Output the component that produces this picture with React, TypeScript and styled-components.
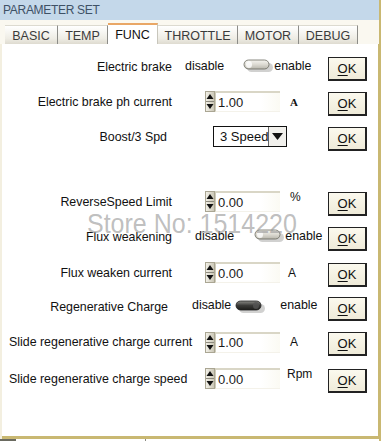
import styled, { createGlobalStyle } from 'styled-components'

const GlobalStyle = createGlobalStyle`
  html, body {
    margin: 0;
    padding: 0;
    background: #ffffff;
  }
  #root {
    width: 381px;
    height: 441px;
  }
`

const khaki = '#c9b872'
const font = '"Liberation Sans", Arial, sans-serif'

const Window = styled.div`
  width: 381px;
  height: 441px;
  display: flex;
  flex-direction: column;
  background: #f3efe0;
  font-family: ${font};
  color: #111;
  overflow: hidden;
  border-right: 2px solid ${khaki};
  box-sizing: border-box;
`

const TitleBar = styled.div`
  height: 20px;
  flex: none;
  background: #c4d8ea;
  color: #3e5166;
  font-size: 12px;
  letter-spacing: -0.3px;
  display: flex;
  align-items: center;
  padding-left: 3px;
`

const TabStrip = styled.div`
  height: 24px;
  flex: none;
  display: flex;
  align-items: flex-end;
  padding-left: 5px;
  background: #faf8f0;
`

const Tab = styled.div<{ $w: number; $active?: boolean }>`
  width: ${p => p.$w}px;
  height: ${p => (p.$active ? 21 : 19)}px;
  box-sizing: border-box;
  display: flex;
  align-items: center;
  justify-content: center;
  font-size: 12.5px;
  color: ${p => (p.$active ? '#111' : '#3b3b3b')};
  background: ${p => (p.$active ? '#ffffff' : 'linear-gradient(#ffffff, #eeece4 70%, #dedbd0)')};
  border-top: ${p => (p.$active ? '2px solid #e9a766' : '1px solid #dcdad0')};
  border-right: 1px solid ${p => (p.$active ? '#c8c6bc' : '#8c8c88')};
  padding-top: ${p => (p.$active ? 0 : 1)}px;
`

const Panel = styled.div`
  flex: 1;
  position: relative;
  margin-left: 2px;
  background: #ffffff;
  border-right: 1px solid ${khaki};
  border-bottom: 3px solid ${khaki};
  padding-top: 5px;
  display: flex;
  flex-direction: column;
`

const BottomEdge = styled.div`
  height: 2px;
  flex: none;
  background: linear-gradient(90deg, #6a6a60 0 16px, #ffffff 16px 145px, #8a8a80 145px 146px, #ffffff 146px);
`

const Row = styled.div<{ $h: number }>`
  height: ${p => p.$h}px;
  flex: none;
  display: flex;
  align-items: center;
  font-size: 12.4px;
`

const Label = styled.span<{ $w: number; $left?: boolean }>`
  width: ${p => p.$w}px;
  flex: none;
  box-sizing: border-box;
  white-space: nowrap;
  text-align: ${p => (p.$left ? 'left' : 'right')};
  padding-left: ${p => (p.$left ? 7 : 0)}px;
`

const Controls = styled.div<{ $ml: number }>`
  flex: 1;
  display: flex;
  align-items: center;
  margin-left: ${p => p.$ml}px;
  white-space: nowrap;
`

const Word = styled.span<{ $ml?: number; $raise?: number }>`
  margin-left: ${p => p.$ml ?? 0}px;
  margin-bottom: ${p => p.$raise ?? 0}px;
`

const Unit = styled.span<{ $ml: number; $serif?: boolean; $raise?: number }>`
  margin-left: ${p => p.$ml}px;
  margin-bottom: ${p => p.$raise ?? 0}px;
  font-family: ${p => (p.$serif ? '"Liberation Serif", "Times New Roman", serif' : font)};
  font-weight: ${p => (p.$serif ? 700 : 400)};
  font-size: ${p => (p.$serif ? 11 : 12)}px;
`

const NumberField = styled.div`
  width: 65px;
  height: 21px;
  box-sizing: border-box;
  border-top: 2px solid #d9d6c6;
  border-left: 1px solid #cfccba;
  border-bottom: 1px solid #f4f2ea;
  background: linear-gradient(90deg, #ffffff 70%, #fbfaf3);
  font-size: 13px;
  color: #1a1a1a;
  display: flex;
  align-items: center;
  padding-left: 2px;
`

const Select = styled.div`
  width: 74px;
  height: 21px;
  box-sizing: border-box;
  border: 1px solid #111;
  display: flex;
  align-items: center;
  font-size: 13px;
  background: #ffffff;
`

const SelectText = styled.span`
  flex: 1;
  padding-left: 6px;
`

const SelectArrow = styled.span`
  width: 17px;
  height: 19px;
  border-left: 1px solid #666;
  background: #f1f0ec;
  display: flex;
  align-items: center;
  justify-content: center;
`

const OkButton = styled.button`
  flex: none;
  width: 39px;
  height: 24px;
  margin-left: auto;
  margin-right: 11px;
  margin-top: 4px;
  padding: 0;
  box-sizing: border-box;
  border: 1px solid #222;
  border-right-width: 2px;
  border-bottom-width: 2px;
  background: linear-gradient(#fbf9ee, #efebd9);
  font-family: ${font};
  font-size: 13px;
  color: #111;
  display: flex;
  align-items: center;
  justify-content: center;
`

const Mnemonic = styled.span`
  text-decoration: underline;
  text-underline-offset: 2px;
`

const Spacer = styled.div<{ $h: number }>`
  height: ${p => p.$h}px;
  flex: none;
`

const Watermark = styled.div`
  position: absolute;
  left: 85px;
  top: 166px;
  font-family: ${font};
  font-size: 25px;
  line-height: 26px;
  transform: scaleY(1.1);
  color: rgba(150, 150, 150, 0.62);
  white-space: nowrap;
  pointer-events: none;
`

const Spinner = () => (
  <svg width="10" height="21" viewBox="0 0 10 21">
    <defs>
      <linearGradient id="spg" x1="0" x2="1">
        <stop offset="0" stopColor="#f4f2ea" />
        <stop offset="1" stopColor="#c9c5b4" />
      </linearGradient>
    </defs>
    <rect x="0.5" y="0.5" width="9" height="20" fill="url(#spg)" stroke="#aaa693" />
    <line x1="1" y1="10.5" x2="9" y2="10.5" stroke="#8d8a7e" />
    <path d="M5 3 L8.5 8 L1.5 8 Z" fill="#111" />
    <path d="M5 18 L8.5 13 L1.5 13 Z" fill="#111" />
  </svg>
)

const Toggle = ({ on }: { on?: boolean }) => (
  <svg width="31" height="16" viewBox="0 0 31 16">
    <defs>
      <linearGradient id={on ? 'tgOn' : 'tgOff'} x1="0" y1="0" x2="0" y2="1">
        <stop offset="0" stopColor={on ? '#8a8a86' : '#f6f5f0'} />
        <stop offset="0.5" stopColor={on ? '#3a3a38' : '#dcdad2'} />
        <stop offset="1" stopColor={on ? '#1c1c1a' : '#b8b6ac'} />
      </linearGradient>
    </defs>
    <rect x="4" y="6" width="26" height="9" rx="4.5" fill="#9a9a96" opacity="0.45" />
    <rect x="1" y="3" width="25" height="9" rx="4.5" fill={`url(#${on ? 'tgOn' : 'tgOff'})`} stroke={on ? '#222' : '#6a6960'} strokeWidth="0.8" />
    <ellipse cx={on ? 21 : 6} cy="7.5" rx="3" ry="3.6" fill={on ? '#555' : '#fff'} opacity="0.8" />
  </svg>
)

const Ok = () => (
  <OkButton>
    <Mnemonic>O</Mnemonic>K
  </OkButton>
)

const Arrow = () => (
  <svg width="11" height="7" viewBox="0 0 11 7">
    <path d="M0 0 L11 0 L5.5 7 Z" fill="#111" />
  </svg>
)

const tabs: { name: string; w: number }[] = [
  { name: 'BASIC', w: 53 },
  { name: 'TEMP', w: 50 },
  { name: 'FUNC', w: 50 },
  { name: 'THROTTLE', w: 80 },
  { name: 'MOTOR', w: 61 },
  { name: 'DEBUG', w: 59 },
]

export default function App() {
  return (
    <>
      <GlobalStyle />
      <Window>
        <TitleBar>PARAMETER SET</TitleBar>
        <TabStrip>
          {tabs.map(t => (
            <Tab key={t.name} $w={t.w} $active={t.name === 'FUNC'}>
              {t.name}
            </Tab>
          ))}
        </TabStrip>
        <Panel>
          <Row $h={35}>
            <Label $w={170}>Electric brake</Label>
            <Controls $ml={13}>
              <Word $raise={2}>disable</Word>
              <Word $ml={19}>
                <Toggle />
              </Word>
              <Word $raise={2}>enable</Word>
            </Controls>
            <Ok />
          </Row>
          <Row $h={35}>
            <Label $w={170}>Electric brake ph current</Label>
            <Controls $ml={33}>
              <Spinner />
              <NumberField>1.00</NumberField>
              <Unit $ml={10} $serif>A</Unit>
            </Controls>
            <Ok />
          </Row>
          <Row $h={35}>
            <Label $w={165}>Boost/3 Spd</Label>
            <Controls $ml={46}>
              <Select>
                <SelectText>3 Speed</SelectText>
                <SelectArrow>
                  <Arrow />
                </SelectArrow>
              </Select>
            </Controls>
            <Ok />
          </Row>
          <Spacer $h={30} />
          <Row $h={35}>
            <Label $w={170}>ReverseSpeed Limit</Label>
            <Controls $ml={33}>
              <Spinner />
              <NumberField>0.00</NumberField>
              <Unit $ml={10} $raise={10}>%</Unit>
            </Controls>
            <Ok />
          </Row>
          <Row $h={35}>
            <Label $w={170}>Flux weakening</Label>
            <Controls $ml={23}>
              <Word $raise={2}>disable</Word>
              <Word $ml={20}>
                <Toggle />
              </Word>
              <Word $raise={2}>enable</Word>
            </Controls>
            <Ok />
          </Row>
          <Row $h={37}>
            <Label $w={170}>Flux weaken current</Label>
            <Controls $ml={33}>
              <Spinner />
              <NumberField>0.00</NumberField>
              <Unit $ml={8}>A</Unit>
            </Controls>
            <Ok />
          </Row>
          <Row $h={32}>
            <Label $w={166}>Regenerative Charge</Label>
            <Controls $ml={24}>
              <Word $raise={4}>disable</Word>
              <Word $ml={4}>
                <Toggle on />
              </Word>
              <Word $ml={14} $raise={4}>enable</Word>
            </Controls>
            <Ok />
          </Row>
          <Row $h={38}>
            <Label $w={200} $left>Slide regenerative charge current</Label>
            <Controls $ml={3}>
              <Spinner />
              <NumberField>1.00</NumberField>
              <Unit $ml={10}>A</Unit>
            </Controls>
            <Ok />
          </Row>
          <Row $h={35}>
            <Label $w={200} $left>Slide regenerative charge speed</Label>
            <Controls $ml={3}>
              <Spinner />
              <NumberField>0.00</NumberField>
              <Unit $ml={7} $raise={10}>Rpm</Unit>
            </Controls>
            <Ok />
          </Row>
          <Watermark>Store No: 1514220</Watermark>
        </Panel>
        <BottomEdge />
      </Window>
    </>
  )
}
